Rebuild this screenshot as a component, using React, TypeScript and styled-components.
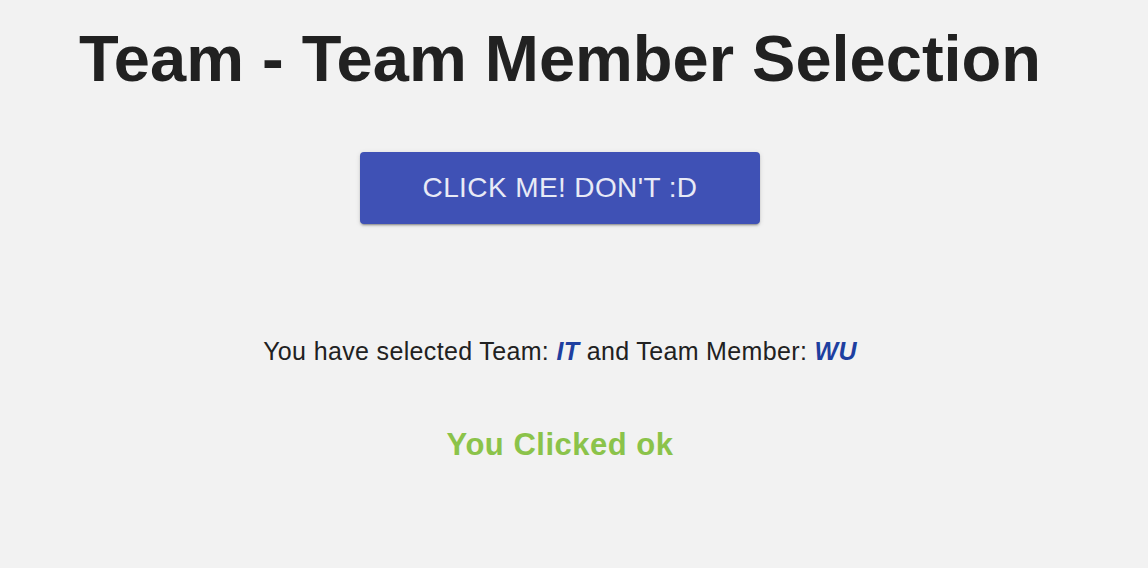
import React from "react";
import styled, { createGlobalStyle } from "styled-components";

const GlobalStyle = createGlobalStyle`
  html, body {
    margin: 0;
    padding: 0;
    background: #f2f2f2;
    font-family: "Liberation Sans", Arial, Helvetica, sans-serif;
    color: #212121;
  }
`;

const Page = styled.main`
  width: 1120px;
  display: flex;
  flex-direction: column;
  align-items: center;
  padding-top: 22px;
`;

const Title = styled.h1`
  margin: 0;
  font-size: 65px;
  line-height: 74px;
  font-weight: 700;
  color: #212121;
  white-space: nowrap;
`;

const ActionButton = styled.button`
  margin-top: 56px;
  width: 400px;
  height: 72px;
  border: none;
  border-radius: 4px;
  background: #3f51b5;
  color: #e8eaf6;
  font-family: "Liberation Sans", Arial, Helvetica, sans-serif;
  font-size: 28px;
  letter-spacing: 0.4px;
  text-transform: uppercase;
  cursor: pointer;
  box-shadow: 0px 3px 1px -2px rgba(0, 0, 0, 0.2),
    0px 2px 2px 0px rgba(0, 0, 0, 0.14), 0px 1px 5px 0px rgba(0, 0, 0, 0.12);
`;

const Selection = styled.p`
  margin: 113px 0 0;
  font-size: 25px;
  line-height: 28px;
  letter-spacing: 0.35px;
  white-space: nowrap;
`;

const Highlight = styled.em`
  font-weight: 700;
  font-style: italic;
  color: #1e3fa0;
`;

const Status = styled.p<{ $tone: string }>`
  margin: 63px 0 0;
  font-size: 31px;
  line-height: 34px;
  letter-spacing: 0.5px;
  font-weight: 700;
  color: ${(p) => p.$tone};
`;

export default function App() {
  return (
    <>
      <GlobalStyle />
      <Page>
        <Title>Team - Team Member Selection</Title>
        <ActionButton>CLICK ME! DON'T :D</ActionButton>
        <Selection>
          You have selected Team: <Highlight>IT</Highlight> and Team Member:{" "}
          <Highlight>WU</Highlight>
        </Selection>
        <Status $tone="#8bc34a">You Clicked ok</Status>
      </Page>
    </>
  );
}
